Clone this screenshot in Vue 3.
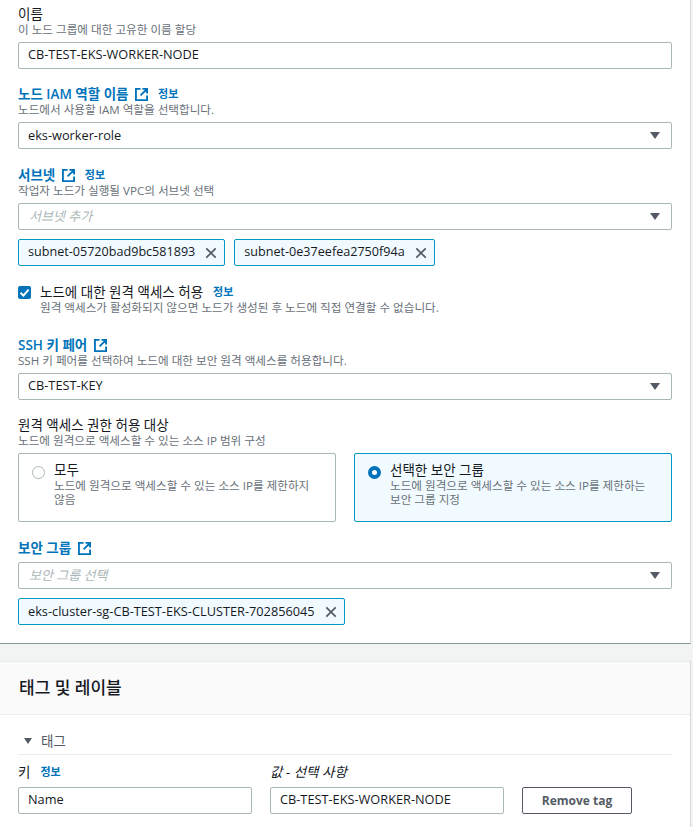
<script setup>
const extPath = 'M6 1H1v12h12V8M8 1h5v5M13 1 6 8'
const xPath = 'M1.5 1.5l11 11M12.5 1.5l-11 11'
</script>

<template>
  <div class="page">
    <section class="card top">
      <div class="field f-name">
        <div class="label">이름</div>
        <div class="desc">이 노드 그룹에 대한 고유한 이름 할당</div>
        <div class="box">CB-TEST-EKS-WORKER-NODE</div>
      </div>

      <div class="field f-iam">
        <div class="label link-row">
          <a class="link">노드 IAM 역할 이름</a>
          <svg class="ext" viewBox="0 0 14 14"><path :d="extPath" /></svg>
          <a class="info">정보</a>
        </div>
        <div class="desc">노드에서 사용할 IAM 역할을 선택합니다.</div>
        <div class="box select">eks-worker-role<span class="caret"></span></div>
      </div>

      <div class="field f-subnet">
        <div class="label link-row">
          <a class="link">서브넷</a>
          <svg class="ext" viewBox="0 0 14 14"><path :d="extPath" /></svg>
          <a class="info">정보</a>
        </div>
        <div class="desc">작업자 노드가 실행될 VPC의 서브넷 선택</div>
        <div class="box select placeholder">서브넷 추가<span class="caret"></span></div>
        <div class="tokens">
          <div class="token subnet">subnet-05720bad9bc581893<svg class="x" viewBox="0 0 14 14"><path :d="xPath" /></svg></div>
          <div class="token subnet">subnet-0e37eefea2750f94a<svg class="x" viewBox="0 0 14 14"><path :d="xPath" /></svg></div>
        </div>
      </div>

      <div class="check-row">
        <span class="check"><svg viewBox="0 0 13 13"><path d="M2.6 6.8l2.8 2.8L10.6 3.6" /></svg></span>
        <div>
          <div class="label link-row"><span>노드에 대한 원격 액세스 허용</span><a class="info">정보</a></div>
          <div class="desc">원격 액세스가 활성화되지 않으면 노드가 생성된 후 노드에 직접 연결할 수 없습니다.</div>
        </div>
      </div>

      <div class="field">
        <div class="label link-row">
          <a class="link">SSH 키 페어</a>
          <svg class="ext" viewBox="0 0 14 14"><path :d="extPath" /></svg>
        </div>
        <div class="desc">SSH 키 페어를 선택하여 노드에 대한 보안 원격 액세스를 허용합니다.</div>
        <div class="box select">CB-TEST-KEY<span class="caret"></span></div>
      </div>

      <div class="field f-access">
        <div class="label">원격 액세스 권한 허용 대상</div>
        <div class="desc">노드에 원격으로 액세스할 수 있는 소스 IP 범위 구성</div>
        <div class="tiles">
          <div class="tile">
            <span class="radio"></span>
            <div>
              <div class="label">모두</div>
              <div class="desc">노드에 원격으로 액세스할 수 있는 소스 IP를 제한하지 않음</div>
            </div>
          </div>
          <div class="tile on">
            <span class="radio on"></span>
            <div>
              <div class="label">선택한 보안 그룹</div>
              <div class="desc">노드에 원격으로 액세스할 수 있는 소스 IP를 제한하는 보안 그룹 지정</div>
            </div>
          </div>
        </div>
      </div>

      <div class="field f-sg">
        <div class="label link-row">
          <a class="link">보안 그룹</a>
          <svg class="ext" viewBox="0 0 14 14"><path :d="extPath" /></svg>
        </div>
        <div class="box select placeholder">보안 그룹 선택<span class="caret"></span></div>
        <div class="tokens">
          <div class="token">eks-cluster-sg-CB-TEST-EKS-CLUSTER-702856045<svg class="x" viewBox="0 0 14 14"><path :d="xPath" /></svg></div>
        </div>
      </div>
    </section>

    <section class="card bottom">
      <header class="head"><h2>태그 및 레이블</h2></header>
      <div class="body">
        <div class="exp"><span class="caret small"></span><span>태그</span></div>
        <div class="tag-grid">
          <div class="label link-row"><span>키</span><a class="info">정보</a></div>
          <div class="label"><i>값 - 선택 사항</i></div>
          <div></div>
          <div class="box">Name</div>
          <div class="box">CB-TEST-EKS-WORKER-NODE</div>
          <button class="btn">Remove tag</button>
        </div>
      </div>
    </section>
  </div>
</template>

<style>
html, body { margin: 0; background: #f2f3f3; }
</style>

<style scoped>
.page {
  width: 693px;
  height: 827px;
  overflow: hidden;
  background: #f2f3f3;
  font-family: "Open Sans", "Noto Sans CJK KR", sans-serif;
  font-size: 12.75px;
  line-height: 16px;
  color: #16191f;
}
.card {
  width: 690px;
  background: #fff;
}
.top {
  height: 643px;
  padding: 6px 18px 0;
  box-sizing: border-box;
  box-shadow: 1px 0 0 #d5dbdb, 0 1px 0 #879596, 1px 1px 0 #aab7b8;
}
.bottom {
  margin-top: 18px;
  box-shadow: 1px 0 0 #d5dbdb;
}
.field { margin-bottom: 17px; }
.f-iam, .f-subnet, .f-access { margin-bottom: 18px; }
.f-sg { margin-bottom: 0; }
.label { font-size: 13.5px; line-height: 16px; }
.desc { font-size: 11.6px; line-height: 16px; color: #687078; }
.tile .label { margin-bottom: 1px; }
.tile .desc { line-height: 14px; width: 258px; }
.link-row { display: flex; align-items: center; height: 16px; }
.link { color: #0073bb; font-weight: 600; }
.info { color: #0073bb; font-size: 11px; font-weight: 600; margin-left: 10px; }
.ext { width: 13px; height: 13px; margin-left: 6.5px; fill: none; stroke: #0073bb; stroke-width: 2; }
.box {
  position: relative;
  height: 27px;
  margin-top: 4px;
  box-sizing: border-box;
  border: 1px solid #aab7b8;
  border-radius: 2px;
  background: #fff;
  padding: 0 9px;
  line-height: 23px;
  font-size: 12.75px;
  color: #16191f;
}
.f-iam .box { line-height: 24px; }
.f-sg .box { margin-top: 6px; }
.box.placeholder { color: #aab7b8; font-style: italic; font-size: 13px; padding-left: 10px; line-height: 25px; }
.caret {
  position: absolute;
  right: 11px;
  top: 9px;
  width: 0;
  height: 0;
  border-left: 5px solid transparent;
  border-right: 5px solid transparent;
  border-top: 7px solid #545b64;
}
.caret.small { position: static; display: block; border-left-width: 4.5px; border-right-width: 4.5px; border-top-width: 6px; }
.tokens { display: flex; gap: 9px; margin-top: 9px; }
.token {
  display: flex;
  align-items: center;
  justify-content: space-between;
  height: 27px;
  box-sizing: border-box;
  border: 1px solid #0099c4;
  border-radius: 2px;
  background: #f1faff;
  padding: 0 7px 2px 9px;
  font-size: 12.75px;
}
.token.subnet { font-size: 12.6px; }
.x { width: 12px; height: 12px; margin: 2px 0 0 10px; fill: none; stroke: #545b64; stroke-width: 2; }
.check-row { display: flex; gap: 9px; margin-bottom: 21px; }
.check {
  flex: none;
  width: 13px;
  height: 13px;
  margin-top: 2px;
  border-radius: 2px;
  background: #0073bb;
  display: block;
}
.check svg { display: block; fill: none; stroke: #fff; stroke-width: 2; }
.tiles { display: grid; grid-template-columns: 318px 318px; gap: 18px; margin-top: 4px; }
.tile {
  display: flex;
  gap: 9px;
  height: 69px;
  box-sizing: border-box;
  padding: 8px 13px 0;
  border: 1px solid #aab7b8;
  border-radius: 2px;
}
.tile.on { background: #f1faff; border-color: #0099c4; }
.radio {
  flex: none;
  width: 13px;
  height: 13px;
  box-sizing: border-box;
  margin-top: 4px;
  border-radius: 50%;
  border: 1px solid #aab7b8;
}
.radio.on { border: 4px solid #0073bb; background: #fff; }
.head {
  height: 54px;
  box-sizing: border-box;
  background: #fafafa;
  border-top: 1px solid #eaeded;
  border-bottom: 1px solid #eaeded;
  padding: 16px 19px 0;
}
.head h2 { margin: 0; font-size: 17px; font-weight: 500; line-height: 20px; }
.body { background: #fff; padding: 18px 18px 0; height: 112px; box-sizing: border-box; }
.exp {
  display: flex;
  align-items: center;
  gap: 9px;
  padding: 0 0 5px 6px;
  border-bottom: 1px solid #eaeded;
  color: #545b64;
  font-size: 13.5px;
  width: 654px;
  box-sizing: border-box;
  height: 22px;
}
.tag-grid {
  display: grid;
  grid-template-columns: 234px 234px 110px;
  column-gap: 18px;
  margin-top: 9px;
}
.tag-grid .box { margin-top: 7px; }
.btn {
  margin-top: 7px;
  height: 27px;
  box-sizing: border-box;
  background: #fff;
  border: 1px solid #545b64;
  border-radius: 2px;
  color: #545b64;
  font: 700 12px "Open Sans", sans-serif;
  padding: 0;
}
</style>
